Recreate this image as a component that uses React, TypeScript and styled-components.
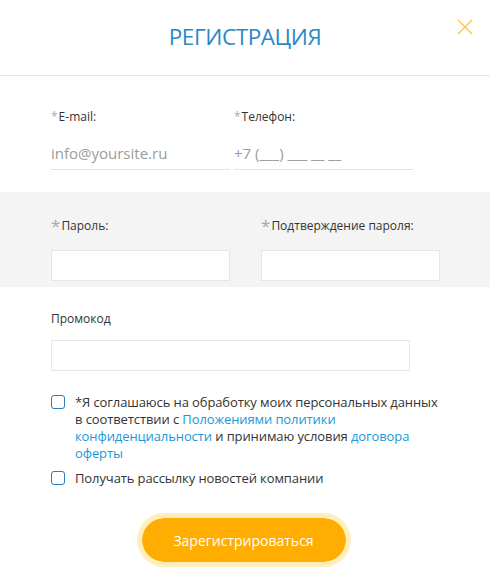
import styled, { createGlobalStyle } from 'styled-components'

const GlobalStyle = createGlobalStyle`
  body {
    margin: 0;
    background: #fff;
    font-family: 'Open Sans', 'Noto Sans', sans-serif;
    color: #333;
  }
  * { box-sizing: border-box; }
`

const Modal = styled.div`
  position: relative;
  width: 490px;
  background: #fff;
`

const Header = styled.header`
  height: 76px;
  border-bottom: 1px solid #e6e6e6;
  display: flex;
  justify-content: center;
  padding-top: 22px;
`

const Title = styled.h1`
  margin: 0;
  font-size: 22.5px;
  font-weight: 400;
  line-height: 30px;
  color: #2a89c5;
  letter-spacing: -0.4px;
`

const CloseButton = styled.button`
  position: absolute;
  top: 18px;
  right: 16px;
  width: 18px;
  height: 18px;
  padding: 0;
  border: none;
  background: none;
  cursor: pointer;
`

const Section = styled.div<{ $grey?: boolean; $pad: string }>`
  padding: ${(p) => p.$pad};
  background: ${(p) => (p.$grey ? '#f4f4f4' : 'transparent')};
`

const Row = styled.div<{ $gap: number }>`
  display: grid;
  grid-template-columns: 179px 179px;
  column-gap: ${(p) => p.$gap}px;
`

const Field = styled.label`
  display: flex;
  flex-direction: column;
`

const Label = styled.span<{ $big?: boolean }>`
  font-size: 12px;
  line-height: 16px;
  height: 16px;
  color: #333;
  display: flex;
  align-items: ${(p) => (p.$big ? 'flex-start' : 'center')};
`

const Star = styled.span<{ $big?: boolean }>`
  color: #a8a8a8;
  font-size: ${(p) => (p.$big ? '17px' : '12px')};
  line-height: ${(p) => (p.$big ? '15px' : '16px')};
  margin-right: 1px;
`

const LineInput = styled.input`
  margin-top: 14px;
  height: 31px;
  width: 100%;
  border: none;
  border-bottom: 1px solid #e3e3e3;
  padding: 0 0 3px;
  font-family: inherit;
  font-size: 15px;
  color: #333;
  background: transparent;
  outline: none;
  &::placeholder { color: #9b9b9b; }
`

const BoxInput = styled.input<{ $width: number; $top: number }>`
  margin-top: ${(p) => p.$top}px;
  width: ${(p) => p.$width}px;
  height: 31px;
  border: 1px solid #e6e6e6;
  background: #fff;
  padding: 0 10px;
  font-family: inherit;
  font-size: 14px;
  outline: none;
`

const CheckRow = styled.label<{ $top: number }>`
  display: flex;
  align-items: flex-start;
  gap: 10px;
  margin-top: ${(p) => p.$top}px;
  font-size: 13px;
  line-height: 17px;
  color: #333;
  cursor: pointer;
`

const Box = styled.span`
  flex: none;
  width: 14px;
  height: 14px;
  margin-top: 1px;
  border: 1px solid #2a7ebf;
  border-radius: 3px;
  background: #fff;
`

const CheckText = styled.span`
  width: 385px;
  letter-spacing: -0.1px;
`

const Link = styled.a`
  color: #1b98d6;
  text-decoration: none;
`

const Footer = styled.div`
  display: flex;
  justify-content: center;
  padding: 26px 3px 12px 0;
`

const SubmitButton = styled.button`
  width: 214px;
  height: 54px;
  border-radius: 27px;
  border: 5px solid #ffeebd;
  background: #ffad00;
  background-clip: padding-box;
  color: #fff;
  font-family: inherit;
  font-size: 14px;
  cursor: pointer;
`

export default function App() {
  return (
    <>
      <GlobalStyle />
      <Modal>
        <Header>
          <Title>РЕГИСТРАЦИЯ</Title>
        </Header>
        <CloseButton aria-label="Закрыть">
          <svg width="18" height="18" viewBox="0 0 18 18">
            <path d="M2 2L16 16M16 2L2 16" stroke="#ffbf3c" strokeWidth="1.2" fill="none" />
          </svg>
        </CloseButton>

        <Section $pad="33px 51px 22px">
          <Row $gap={4}>
            <Field>
              <Label>
                <Star>*</Star>E-mail:
              </Label>
              <LineInput placeholder="info@yoursite.ru" />
            </Field>
            <Field>
              <Label>
                <Star>*</Star>Телефон:
              </Label>
              <LineInput placeholder="+7 (___) ___ __ __" />
            </Field>
          </Row>
        </Section>

        <Section $grey $pad="26px 51px 6px">
          <Row $gap={31}>
            <Field>
              <Label $big>
                <Star $big>*</Star>Пароль:
              </Label>
              <BoxInput type="password" $width={179} $top={16} />
            </Field>
            <Field>
              <Label $big>
                <Star $big>*</Star>Подтверждение пароля:
              </Label>
              <BoxInput type="password" $width={179} $top={16} />
            </Field>
          </Row>
        </Section>

        <Section $pad="24px 51px 0">
          <Field>
            <Label>Промокод</Label>
            <BoxInput $width={359} $top={13} />
          </Field>

          <CheckRow $top={23}>
            <Box />
            <CheckText>
              *Я соглашаюсь на обработку моих персональных данных в соответствии с{' '}
              <Link href="#">Положениями политики конфиденциальности</Link> и принимаю условия{' '}
              <Link href="#">договора оферты</Link>
            </CheckText>
          </CheckRow>

          <CheckRow $top={8}>
            <Box />
            <CheckText>Получать рассылку новостей компании</CheckText>
          </CheckRow>
        </Section>

        <Footer>
          <SubmitButton>Зарегистрироваться</SubmitButton>
        </Footer>
      </Modal>
    </>
  )
}
